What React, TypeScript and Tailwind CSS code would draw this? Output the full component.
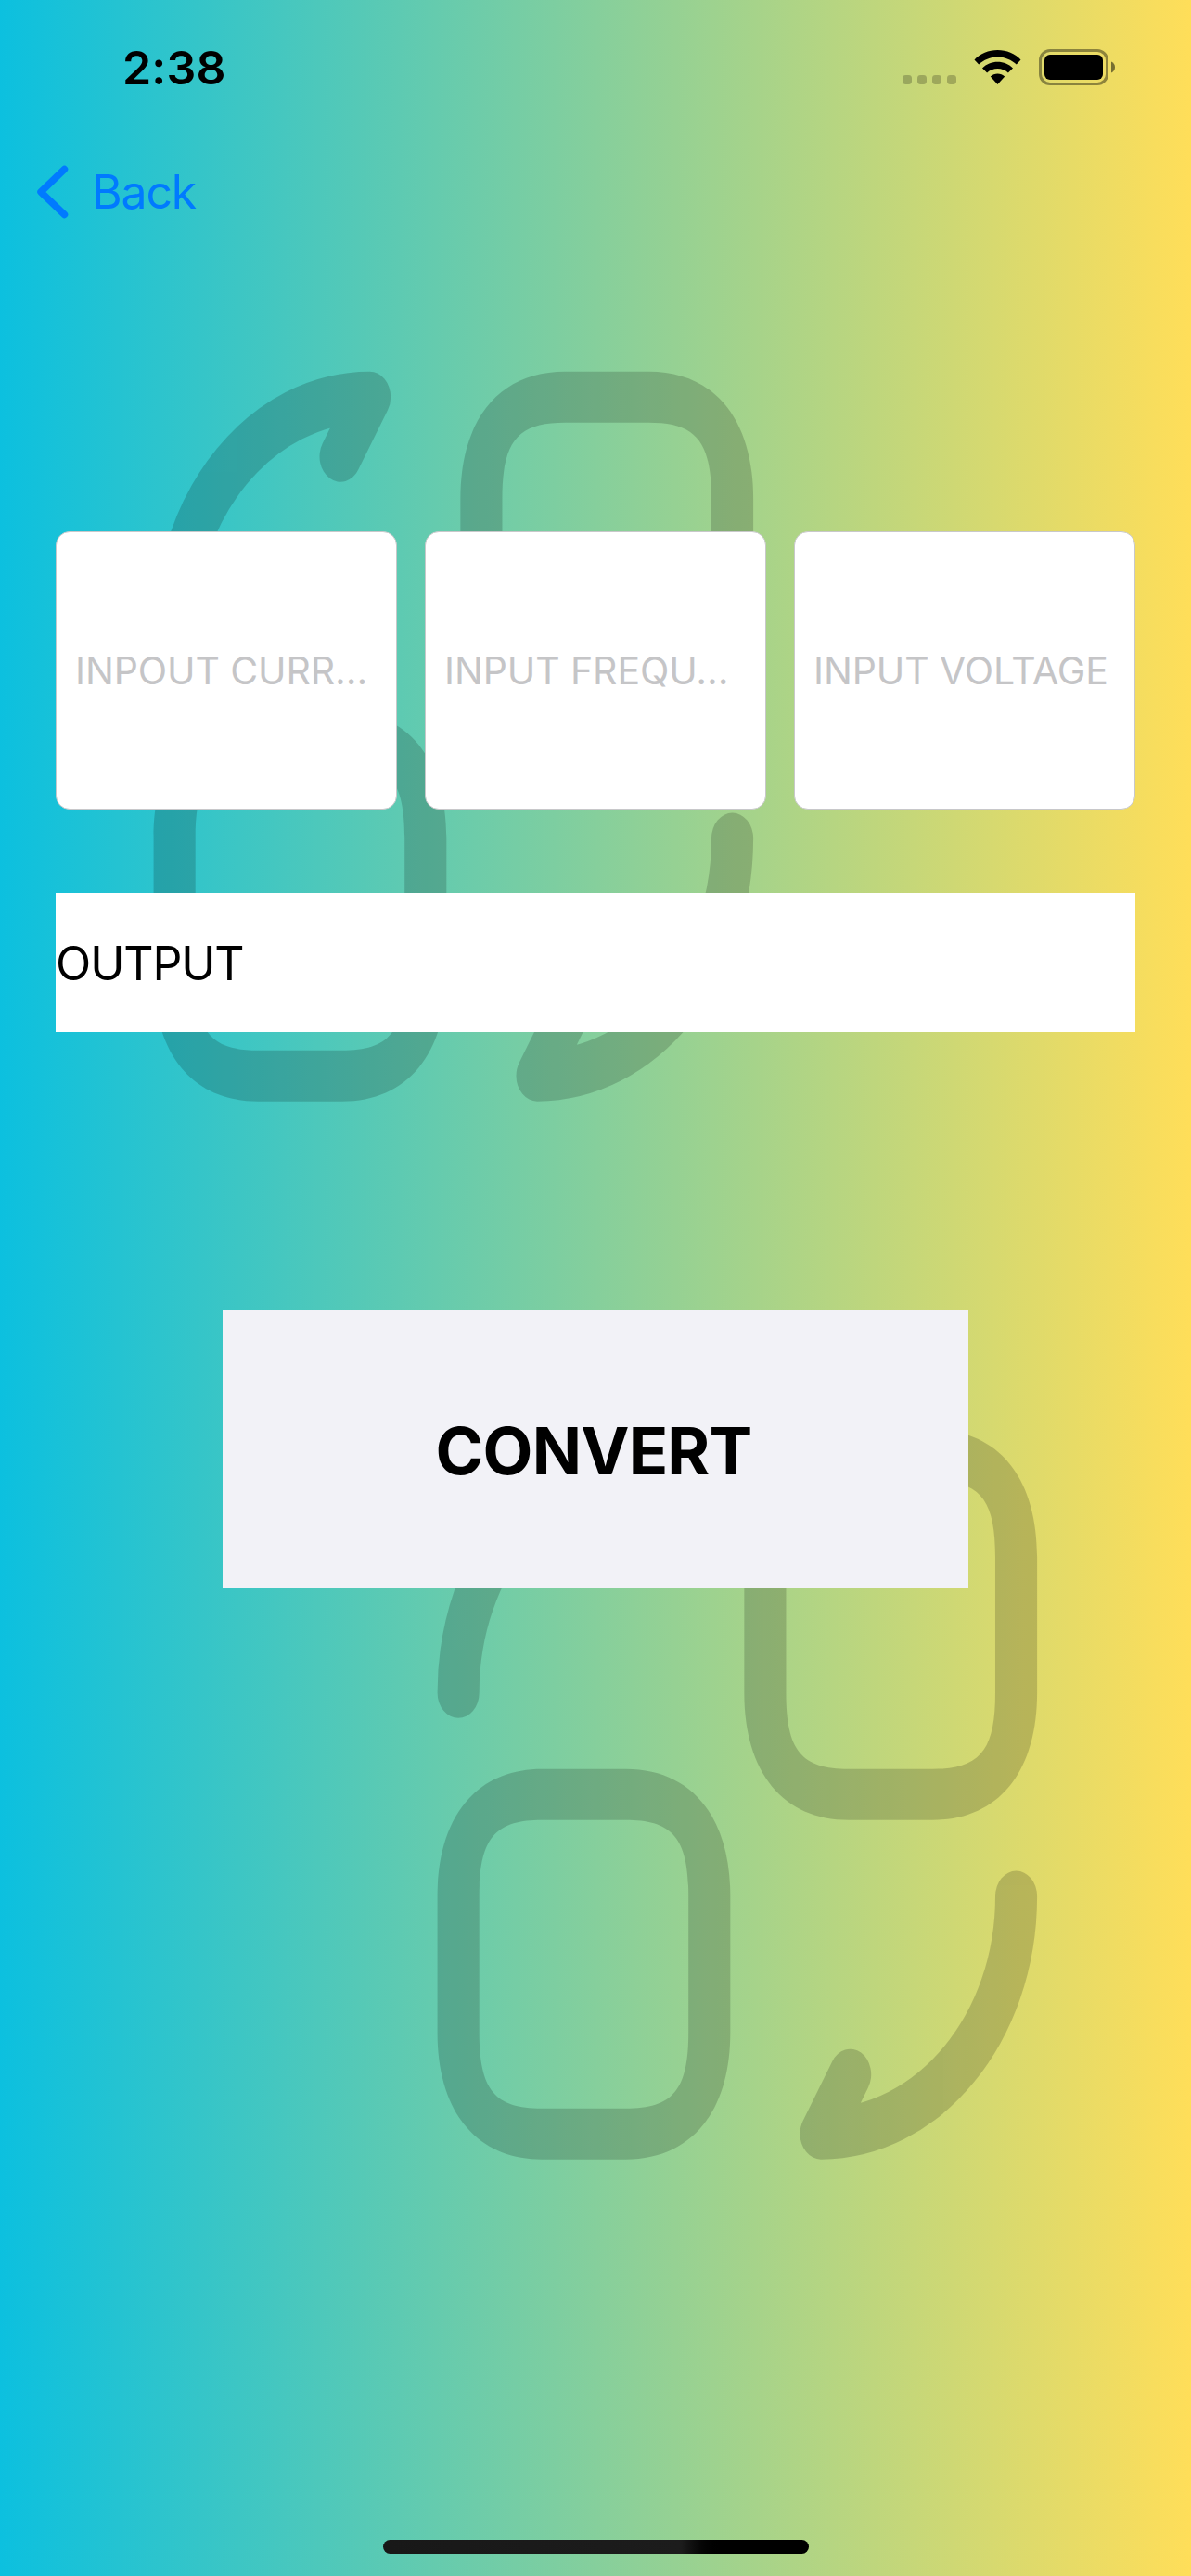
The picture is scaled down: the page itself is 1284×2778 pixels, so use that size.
function ConvertShape({ className }: { className: string }) {
  return (
    <svg className={className} viewBox="0 0 24 24" preserveAspectRatio="none" fill="none" aria-hidden="true">
      <g opacity="0.17">
        <path
          fill="#000"
          fillRule="evenodd"
          d="M5 11.25H8C10.35 11.25 11.75 12.65 11.75 15V19C11.75 21.35 10.35 22.75 8 22.75H5C2.65 22.75 1.25 21.35 1.25 19V15C1.25 12.65 2.65 11.25 5 11.25ZM5 12.75C3.3 12.75 2.75 13.3 2.75 15V19C2.75 20.7 3.3 21.25 5 21.25H8C9.7 21.25 10.25 20.7 10.25 19V15C10.25 13.3 9.7 12.75 8 12.75Z"
        />
        <path
          fill="#000"
          fillRule="evenodd"
          d="M16 1.25H19C21.35 1.25 22.75 2.65 22.75 5V9C22.75 11.35 21.35 12.75 19 12.75H16C13.65 12.75 12.25 11.35 12.25 9V5C12.25 2.65 13.65 1.25 16 1.25ZM16 2.75C14.3 2.75 13.75 3.3 13.75 5V9C13.75 10.7 14.3 11.25 16 11.25H19C20.7 11.25 21.25 10.7 21.25 9V5C21.25 3.3 20.7 2.75 19 2.75Z"
        />
        <path
          stroke="#000"
          strokeWidth="1.5"
          strokeLinecap="round"
          strokeLinejoin="round"
          d="M22 15C22 18.87 18.87 22 15 22L16.05 20.25M2 9C2 5.13 5.13 2 9 2L7.95 3.75"
        />
      </g>
    </svg>
  );
}

function StatusIcons() {
  return (
    <svg className="h-[40px] w-[232px]" viewBox="972 53 232 40" fill="none" aria-hidden="true">
      {[973, 989, 1005, 1021].map((x) => (
        <rect key={x} x={x} y="81" width="10" height="10" rx="3.4" fill="#000" fillOpacity="0.22" />
      ))}
      <g fill="#000">
        <path d="M1075.5 54C1085.2 54 1094.3 57.8 1100.5 64.4L1095.8 69.6C1090.5 64.5 1083.2 61.5 1075.5 61.5C1067.8 61.5 1060.5 64.5 1055.2 69.6L1050.5 64.4C1056.7 57.8 1065.8 54 1075.5 54Z" />
        <path d="M1075.5 66.7C1081.8 66.7 1087.6 69.1 1092 73.4L1086.9 78.6C1083.9 75.7 1079.9 74.1 1075.5 74.1C1071.1 74.1 1067.1 75.7 1064.1 78.6L1059 73.4C1063.4 69.1 1069.2 66.7 1075.5 66.7Z" />
        <path d="M1075.5 79.4C1078.4 79.4 1081.1 80.5 1083.2 82.5L1075.5 91L1067.8 82.5C1069.9 80.5 1072.6 79.4 1075.5 79.4Z" />
      </g>
      <rect x="1121.5" y="54.5" width="72" height="36" rx="10.5" stroke="#000" strokeOpacity="0.4" strokeWidth="3" />
      <rect x="1126" y="59" width="63" height="27" rx="6" fill="#000" />
      <path d="M1198 66.5C1200.6 67.6 1202 69.9 1202 72.5C1202 75.1 1200.6 77.4 1198 78.5Z" fill="#000" fillOpacity="0.5" />
    </svg>
  );
}

function Field({ label }: { label: string }) {
  return (
    <div className="flex h-[300px] items-center rounded-[15px] border border-[#c8c8ca] bg-white pl-5">
      <span className="whitespace-nowrap text-[41px] leading-none tracking-[-0.1px] text-[#c5c5c7]">{label}</span>
    </div>
  );
}

export default function App() {
  return (
    <main className="relative isolate flex h-[2778px] w-[1284px] flex-col overflow-hidden bg-linear-to-r/srgb from-[#0cc0df] to-[#ffde59] font-['Inter',sans-serif] text-black">
      <ConvertShape className="absolute left-[128.4px] top-[355px] -z-10 h-[878.4px] w-[721.7px]" />
      <ConvertShape className="absolute left-[434.2px] top-[1495.9px] -z-10 h-[878.4px] w-[721.7px]" />

      <header className="flex h-[146px] items-center justify-between pl-[132px] pr-[80px]">
        <span className="text-[50px] font-semibold leading-none tracking-[0.2px]">2:38</span>
        <StatusIcons />
      </header>

      <nav className="flex h-[122px] items-center gap-[24px] pl-[39px] text-[#007aff]">
        <svg className="h-[60px] w-[36px]" viewBox="0 0 36 60" fill="none" aria-hidden="true">
          <path d="M30.5 5.5L5 30L30.5 54.5" stroke="currentColor" strokeWidth="7.5" strokeLinecap="round" strokeLinejoin="round" />
        </svg>
        <span className="text-[50px] leading-none tracking-[-1.2px]">Back</span>
      </nav>

      <section className="mt-[305px] grid grid-cols-3 gap-[30px] px-[60px]">
        <Field label="INPOUT CURR..." />
        <Field label="INPUT FREQU..." />
        <Field label="INPUT VOLTAGE" />
      </section>

      <div className="mx-[60px] mt-[90px] flex h-[150px] items-center bg-white pt-[2px]">
        <span className="text-[50px] leading-none tracking-[-1.1px]">OUTPUT</span>
      </div>

      <button className="mx-[240px] mt-[300px] flex h-[300px] items-center justify-center bg-[#f2f2f7] pr-[4px] pt-[3px]">
        <span className="text-[70px] font-bold leading-none tracking-[-0.8px]">CONVERT</span>
      </button>

      <div className="mb-[24px] mt-auto h-[15px] w-[459px] self-center rounded-full bg-linear-to-r from-[#181818] from-0% via-[#1c1c1c] via-70% to-black to-80%" />
    </main>
  );
}
